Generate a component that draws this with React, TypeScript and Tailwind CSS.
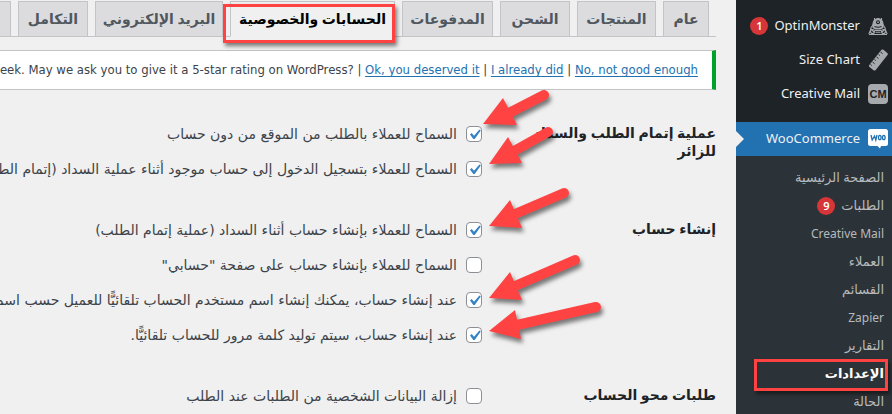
import React, { useState } from 'react';
import clsx from 'clsx';

const tabs = [
  { label: 'عام', width: 'w-[46px]' },
  { label: 'المنتجات', width: 'w-[79px]' },
  { label: 'الشحن', width: 'w-[70px]' },
  { label: 'المدفوعات', width: 'w-[91px]' },
  { label: 'الحسابات والخصوصية', width: 'w-[165px]', current: true },
  { label: 'البريد الإلكتروني', width: 'w-[128px]' },
  { label: 'التكامل', width: 'w-[70px]' },
  { label: 'متقدم', width: 'w-[70px]' },
];

const submenu = [
  { label: 'الصفحة الرئيسية' },
  { label: 'الطلبات', count: 9 },
  { label: 'Creative Mail', latin: true },
  { label: 'العملاء' },
  { label: 'القسائم' },
  { label: 'Zapier', latin: true },
  { label: 'التقارير' },
  { label: 'الإعدادات', current: true },
  { label: 'الحالة' },
];

const groups = [
  {
    title: 'عملية إتمام الطلب والسداد للزائر',
    options: [
      { id: 'guest_checkout', label: 'السماح للعملاء بالطلب من الموقع من دون حساب', checked: true },
      {
        id: 'login_reminder',
        label: 'السماح للعملاء بتسجيل الدخول إلى حساب موجود أثناء عملية السداد (إتمام الطلب)',
        checked: true,
      },
    ],
  },
  {
    title: 'إنشاء حساب',
    options: [
      {
        id: 'signup_checkout',
        label: 'السماح للعملاء بإنشاء حساب أثناء السداد (عملية إتمام الطلب)',
        checked: true,
      },
      { id: 'signup_account', label: 'السماح للعملاء بإنشاء حساب على صفحة "حسابي"', checked: false },
      {
        id: 'generate_username',
        label: 'عند إنشاء حساب، يمكنك إنشاء اسم مستخدم الحساب تلقائيًّا للعميل حسب اسمه',
        checked: true,
      },
      { id: 'generate_password', label: 'عند إنشاء حساب، سيتم توليد كلمة مرور للحساب تلقائيًّا.', checked: true },
    ],
  },
  {
    title: 'طلبات محو الحساب',
    options: [{ id: 'erasure', label: 'إزالة البيانات الشخصية من الطلبات عند الطلب', checked: false }],
  },
];

function MonsterIcon() {
  return (
    <svg viewBox="0 0 20 20" className="h-5 w-5" fill="none" stroke="#a7aaad" strokeWidth="1.1">
      <path d="M5 11.500V8a5 5.500 0 0 1 10 0v3.500L12.500 13h-5z" fill="#a7aaad" />
      <path d="M6.500 4.500 6.500 2M13.500 4.500 13.500 2" />
      <circle cx="10" cy="6.200" r="2" fill="#1d2327" stroke="none" />
      <circle cx="10" cy="6.200" r="0.900" fill="#a7aaad" stroke="none" />
      <path d="M6.500 10.500q3.500 1.500 7 0" stroke="#1d2327" />
      <path d="M5.500 8 2.500 12.500M14.500 8l3 4.500M3 13 .8 18M17 13l2.200 5" />
      <path d="M2.500 12.500 6 16M17.500 12.500 14 16" />
      <circle cx="4.500" cy="15.500" r="2" />
      <circle cx="15.500" cy="15.500" r="2" />
      <path d="M7 14.500h6M7.500 16.300h5M1 18.500h18" />
    </svg>
  );
}

function RulerIcon() {
  return (
    <svg viewBox="0 0 20 22" className="h-[22px] w-5">
      <path
        d="M13.500.8Q14.500 0 15.500.8L19.300 4Q20.300 5 19.500 6L7.500 21.200Q6.500 22 5.500 21.200L1.500 18Q.5 17 1.300 16z"
        fill="#a7aaad"
      />
      <path
        d="m12.500 3 2 1.600M10.500 5.500l1.300 1M8.500 8l2 1.600M6.500 10.500l1.300 1M4.500 13l2 1.600M2.500 15.500l1.300 1"
        stroke="#1d2327"
      />
    </svg>
  );
}

function MailIcon() {
  return (
    <span className="flex h-5 w-5 items-center justify-center rounded-sm bg-[#a7aaad] font-['Liberation_Sans',sans-serif] text-[11px] font-bold text-[#1d2327]">
      CM
    </span>
  );
}

function WooIcon() {
  return (
    <svg viewBox="0 0 20 20" className="h-5 w-5">
      <path
        d="M2.500 0h15A2.500 2.500 0 0 1 20 2.500v12a2.500 2.500 0 0 1-2.500 2.500H13l-1 2.500L9.500 17h-7A2.500 2.500 0 0 1 0 14.500v-12A2.500 2.500 0 0 1 2.500 0z"
        fill="#fff"
      />
      <path d="m3 6 1.200 5L6.500 7l1.300 4L9 6" fill="none" stroke="#2271b1" strokeWidth="1.300" />
      <ellipse cx="11.800" cy="8.500" rx="1.300" ry="2.200" fill="none" stroke="#2271b1" strokeWidth="1.300" />
      <ellipse cx="15.800" cy="8.500" rx="1.300" ry="2.200" fill="none" stroke="#2271b1" strokeWidth="1.300" />
    </svg>
  );
}

function Badge({ count }: { count: number }) {
  return (
    <span className="flex h-[18px] w-[18px] items-center justify-center rounded-full bg-[#d63638] text-[11px] font-semibold text-white">
      {count}
    </span>
  );
}

function MenuItem({ label, icon, count }: { label: string; icon: React.ReactNode; count?: number }) {
  return (
    <li>
      <a href="#" className="flex h-[34px] items-center gap-1.5 pr-1 text-[13px] text-[#f0f0f1]">
        {icon}
        <span className="pr-0.5">{label}</span>
        {count && <Badge count={count} />}
      </a>
    </li>
  );
}

function Sidebar() {
  return (
    <nav className="w-[156px] shrink-0 bg-[#1d2327] pt-[9px]">
      <ul>
        <MenuItem label="OptinMonster" icon={<MonsterIcon />} count={1} />
        <MenuItem label="Size Chart" icon={<RulerIcon />} />
        <MenuItem label="Creative Mail" icon={<MailIcon />} />
      </ul>
      <ul className="relative mt-[11px] bg-[#2271b1]">
        <MenuItem label="WooCommerce" icon={<WooIcon />} />
        <li className="absolute left-0 top-[9px] border-y-8 border-l-8 border-y-transparent border-l-[#f0f0f0]" />
      </ul>
      <ul className="bg-[#2c3338] py-2">
        {submenu.map((item) => (
          <li key={item.label} className="relative">
            <a
              href="#"
              className={clsx(
                'flex h-7 items-center gap-1.5 pr-2',
                item.latin ? 'text-xs' : 'text-[13px]',
                item.current ? 'font-bold text-white' : 'text-[#b7babd]'
              )}
            >
              {item.label}
              {item.count && <Badge count={item.count} />}
            </a>
            {item.current && (
              <span className="absolute -top-px left-[18px] right-1 h-8 border-3 border-[#ff4343] shadow-[2px_3px_4px_rgba(0,0,0,0.5)]" />
            )}
          </li>
        ))}
      </ul>
    </nav>
  );
}

function Tabs() {
  return (
    <div className="flex gap-[7px] border-b border-[#c3c4c7] pr-[7px] pt-px">
      {tabs.map((tab) => (
        <button
          key={tab.label}
          type="button"
          className={clsx(
            'relative -mb-px flex h-9 shrink-0 items-center justify-center whitespace-nowrap border border-[#c3c4c7] text-sm font-bold',
            tab.width,
            tab.current ? 'border-b-[#f0f0f0] bg-[#f0f0f0] text-black' : 'bg-[#dcdcde] text-[#50575e]'
          )}
        >
          {tab.label}
          {tab.current && (
            <span className="absolute -bottom-[7px] -left-2 -right-px top-[2px] border-3 border-[#ff4343] shadow-[2px_3px_4px_rgba(0,0,0,0.5)]" />
          )}
        </button>
      ))}
    </div>
  );
}

function Notice() {
  const link = 'text-[#2271b1] underline underline-offset-2';
  return (
    <div className="mt-[13px] flex h-10 items-center border border-r-4 border-l-0 border-[#c3c4c7] border-r-[#00a32a] bg-white pr-[14px] font-['DejaVu_Sans_Condensed','DejaVu_Sans',sans-serif] text-[13px] text-[#3c434a]">
      <p dir="ltr" className="whitespace-nowrap">
        week. May we ask you to give it a 5-star rating on WordPress? |{' '}
        <a href="#" className={link}>Ok, you deserved it</a> |{' '}
        <a href="#" className={link}>I already did</a> |{' '}
        <a href="#" className={link}>No, not good enough</a>
      </p>
    </div>
  );
}

function Option({ id, label, checked }: { id: string; label: string; checked: boolean }) {
  const [on, setOn] = useState(checked);
  return (
    <div className="flex h-[35px] items-center gap-[9px]">
      <span className="relative flex shrink-0">
        <input
          id={id}
          type="checkbox"
          checked={on}
          onChange={(e) => setOn(e.target.checked)}
          className="h-4 w-4 appearance-none rounded border border-[#8c8f94] bg-white"
        />
        {on && (
          <svg viewBox="0 0 16 16" className="pointer-events-none absolute inset-0 h-4 w-4">
            <path d="m4 8.500 1.700-1.400L8 9.800l5.400-6.300 1.400.9L8.700 13H7.300z" fill="#3582c4" />
          </svg>
        )}
      </span>
      <label
        htmlFor={id}
        className="whitespace-nowrap font-['DejaVu_Sans',sans-serif] text-sm text-[#3c434a]"
      >
        {label}
      </label>
    </div>
  );
}

// Each arrow: head outline, then the two ends of its shaft
const arrows = [
  { head: '483,124 503,98 517,125', from: [509, 113], to: [544, 95] },
  { head: '489,164 508,137 522,163', from: [514, 151], to: [548, 132] },
  { head: '489,226 510,200 522,228', from: [515, 214], to: [564, 193] },
  { head: '489,298 510,272 522,300', from: [515, 286], to: [575, 260] },
  { head: '489,331 515,310 521,339', from: [517, 325], to: [596, 307] },
];

function Arrows() {
  return (
    <svg
      viewBox="480 80 140 270"
      className="pointer-events-none absolute right-[116px] top-20 h-[270px] w-[140px] drop-shadow-[2px_4px_2px_rgba(0,0,0,0.5)]"
    >
      {arrows.map((a) => (
        <g key={a.head} fill="#ff4343" stroke="#ff4343">
          <polygon points={a.head} stroke="none" />
          <line x1={a.from[0]} y1={a.from[1]} x2={a.to[0]} y2={a.to[1]} strokeWidth="10" strokeLinecap="round" />
        </g>
      ))}
    </svg>
  );
}

export default function App() {
  return (
    <div
      dir="rtl"
      className="flex h-screen overflow-hidden bg-[#f0f0f0] font-['Noto_Sans','DejaVu_Sans',sans-serif]"
    >
      <Sidebar />
      <main className="relative min-w-0 flex-1 overflow-hidden pr-5">
        <Tabs />
        <Notice />
        <form className="mt-[26px] flex flex-col gap-[26px]">
          {groups.map((group) => (
            <fieldset key={group.title} aria-label={group.title} className="flex min-w-0">
              <div className="w-[234px] shrink-0 pl-10 pt-2 text-sm leading-[18px] font-bold text-[#1d2327]">
                {group.title}
              </div>
              <div>
                {group.options.map((option) => (
                  <Option key={option.id} {...option} />
                ))}
              </div>
            </fieldset>
          ))}
        </form>
        <Arrows />
      </main>
    </div>
  );
}
